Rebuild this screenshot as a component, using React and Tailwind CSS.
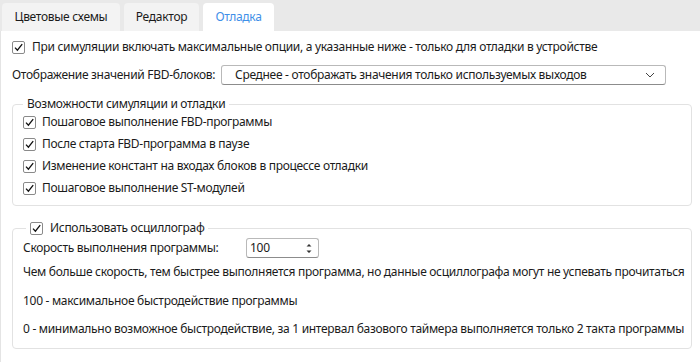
import React from "react";

function Check({ className = "" }) {
  return (
    <span className={"inline-flex items-center justify-center w-[13px] h-[13px] border border-[#8a8a8a] rounded-[2px] bg-white shrink-0 " + className}>
      <svg width="11" height="11" viewBox="0 0 11 11">
        <path d="M2 5.6 L4.4 8.2 L9.2 2.2" fill="none" stroke="#111" strokeWidth="1.3" />
      </svg>
    </span>
  );
}

function CheckRow({ children }) {
  return (
    <div className="flex items-center h-[22px]">
      <Check />
      <span className="ml-[6px]">{children}</span>
    </div>
  );
}

export default function App() {
  return (
    <div className="w-[700px] h-[362px] bg-white text-[12px] tracking-[-0.3px] whitespace-nowrap text-[#1b1b1b] overflow-hidden flex flex-col" style={{ fontFamily: '"Noto Sans", "Open Sans", sans-serif' }}>
      <div className="h-[31px] bg-[#e9e9e9] flex items-end pl-[2px] gap-[4px] shrink-0">
        <div className="h-[28px] w-[118px] bg-[#f3f3f3] rounded-t-[4px] flex items-center justify-center">Цветовые схемы</div>
        <div className="h-[28px] w-[75px] bg-[#f3f3f3] rounded-t-[4px] flex items-center justify-center">Редактор</div>
        <div className="h-[28px] w-[71px] bg-white rounded-t-[4px] flex items-center justify-center text-[#3f8fe8]">Отладка</div>
      </div>
      <div className="flex-1 border-l border-[#e4e4e4] pl-[11px] pr-[8px] pt-[9px]">
        <div className="flex items-center h-[14px]">
          <Check />
          <span className="ml-[7px]">При симуляции включать максимальные опции, а указанные ниже - только для отладки в устройстве</span>
        </div>
        <div className="flex items-center mt-[11px] h-[20px]">
          <span className="w-[209px]">Отображение значений FBD-блоков:</span>
          <div className="w-[445px] h-[20px] border border-[#b9b9b9] border-b-[#8c8c8c] rounded-[3px] flex items-center pl-[13px] pr-[10px] justify-between">
            <span>Среднее - отображать значения только используемых выходов</span>
            <svg width="10" height="6" viewBox="0 0 10 6"><path d="M1 1 L5 5 L9 1" fill="none" stroke="#444" strokeWidth="1" /></svg>
          </div>
        </div>
        <div className="mt-[19px] w-[680px] border border-[#e2e2e2] rounded-[4px] pl-[10px] pb-[6px] relative">
          <div className="absolute -top-[9px] left-[10px] bg-white px-[4px] leading-[16px]">Возможности симуляции и отладки</div>
          <div className="pt-[6px]">
            <CheckRow>Пошаговое выполнение FBD-программы</CheckRow>
            <CheckRow>После старта FBD-программа в паузе</CheckRow>
            <CheckRow>Изменение констант на входах блоков в процессе отладки</CheckRow>
            <CheckRow>Пошаговое выполнение ST-модулей</CheckRow>
          </div>
        </div>
        <div className="mt-[22px] w-[680px] border border-[#e2e2e2] rounded-[4px] pl-[10px] pb-[9px] relative">
          <div className="absolute -top-[9px] left-[13px] bg-white px-[4px] flex items-center leading-[16px]">
            <Check />
            <span className="ml-[7px]">Использовать осциллограф</span>
          </div>
          <div className="mt-[9px] flex items-center h-[20px]">
            <span className="w-[223px]">Скорость выполнения программы:</span>
            <div className="w-[73px] h-[20px] border border-[#b9b9b9] border-b-[#8c8c8c] rounded-[3px] flex items-center pl-[3px] pr-[6px] justify-between">
              <span>100</span>
              <svg width="6" height="11" viewBox="0 0 6 11"><path d="M0.5 3.5 L3 1 L5.5 3.5 Z M0.5 7.5 L3 10 L5.5 7.5 Z" fill="#333" /></svg>
            </div>
          </div>
          <div className="mt-[4px] h-[20px] flex items-center">Чем больше скорость, тем быстрее выполняется программа, но данные осциллографа могут не успевать прочитаться</div>
          <div className="mt-[9px] h-[20px] flex items-center">100 - максимальное быстродействие программы</div>
          <div className="mt-[8px] h-[20px] flex items-center">0 - минимально возможное быстродействие, за 1 интервал базового таймера выполняется только 2 такта программы</div>
        </div>
      </div>
    </div>
  );
}
